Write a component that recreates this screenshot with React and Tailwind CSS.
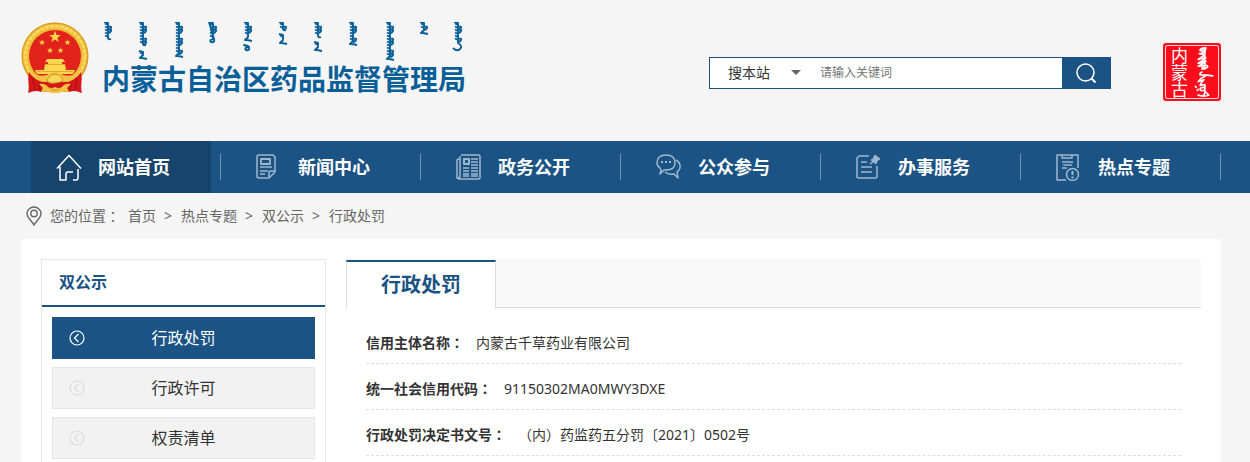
import React from "react";

const STAR = "M0-10 2.4-3.1 9.5-3.1 3.8 1.2 5.9 8.1 0 4-5.9 8.1-3.8 1.2-9.5-3.1-2.4-3.1Z";

function Emblem() {
  return (
    <svg viewBox="0 0 68 72" className="h-[72px] w-[68px] shrink-0" aria-hidden="true">
      <circle cx="34" cy="34" r="33.5" fill="#eebb36" />
      <circle cx="34" cy="34" r="32.800" fill="none" stroke="#d99d27" strokeWidth="1.2" />
      <circle cx="34" cy="34" r="29.800" fill="none" stroke="#f9d862" strokeWidth="3" strokeDasharray="4 1" />
      <path d="M8 50C6 57 9 64 7 71c5-2 9-3 13-1h28c4-2 8-1 13 1-2-7 1-14-1-21-3 5-9 9-14 10H22C17 59 11 55 8 50z" fill="#d5161a" />
      <path d="M12 56l2 12M56 56l-2 12M18 61l1 8M50 61l-1 8" stroke="#a51114" strokeWidth="1.2" />
      <circle cx="34" cy="34" r="26" fill="#e2231c" />
      <g fill="#fbd750">
        <path d={STAR} transform="translate(34 15) scale(.62)" />
        <path d={STAR} transform="translate(21 20.5) scale(.32)" />
        <path d={STAR} transform="translate(46.5 20.5) scale(.32)" />
        <path d={STAR} transform="translate(29 28.5) scale(.32)" />
        <path d={STAR} transform="translate(39.5 28.5) scale(.32)" />
        <path d="M26 37h16l2 3H24zM27 40h14v2H27zM24 42h20l1 6H23zM14 48h40l-2 4H16z" />
      </g>
      <path d="M24 42.500h20M16 49.500h36" stroke="#dc9c2b" strokeWidth=".8" />
      <path d="M9 48q8 8 17 5 4-3 8-3t8 3q9 3 17-5-4 11-16 12-4-5-9-5t-9 5Q13 59 9 48z" fill="#f1c341" />
      <path d="M27 56q3-4 7-4t7 4-7 5-7-5z" fill="#f8d65a" stroke="#d29225" />
      <path d="M18 62q6-1 9 3 3 2 7 0 4 2 7 0 3-4 9-3l-4 4 2 4q-7-1-10 1h-8q-3-2-10-1l2-4z" fill="#f1c341" />
      <path d="M29 66q5 5 10 0" fill="none" stroke="#d29225" />
    </svg>
  );
}

const SCRIPT_WORDS = [
  { x: 6, parts: [[0, 15, "hook"]] },
  { x: 41, parts: [[0, 21, "hook"], [29, 3, "tail"]] },
  { x: 77, parts: [[0, 30, "tail"]] },
  { x: 111, parts: [[0, 16, "loop"]] },
  { x: 146, parts: [[0, 14, "tail"], [23, 1, "loop"]] },
  { x: 181, parts: [[0, 6, "hook"], [12, 5, "tail"]] },
  { x: 216, parts: [[0, 13, "hook"], [20, 4, "tail"]] },
  { x: 251, parts: [[0, 18, "tail"]] },
  { x: 288, parts: [[0, 33, "tail"]] },
  { x: 322, parts: [[0, 7, "tail"]] },
  { x: 356, parts: [[0, 20, "sweep"]] },
];

const ENDINGS = {
  hook: "q1 2 3 1",
  tail: "l-3 3 2 0 5 1",
  loop: "q-4 1-2 3q4 1 3-3z",
  sweep: "q5 3 2 6t-7-1",
};

function strokes(x, [y, length, ending]) {
  let d = `M${x - 4} ${y}l4 1v${length}${ENDINGS[ending]}`;
  for (let i = 2; i < length; i += 3) {
    d += `M${x} ${y + i + 1}l-3-1.500`;
    if (i % 4 < 2) d += `M${x} ${y + i}q4-1 3 1t-3 2`;
  }
  return d;
}

function MongolianLine() {
  return (
    <svg viewBox="0 0 362 40" className="h-10 w-[362px]" fill="none" stroke="#0a5f99" strokeWidth="1.900" strokeLinejoin="round" aria-hidden="true">
      {SCRIPT_WORDS.map((w) => (
        <path key={w.x} d={w.parts.map((p) => strokes(w.x, p)).join("")} />
      ))}
    </svg>
  );
}

function Seal() {
  return (
    <a href="#" aria-label="内蒙古" className="flex size-[58px] items-center justify-center rounded-[3px] bg-[#fd0d1b] p-[2px]">
      <span className="flex size-full items-center justify-evenly rounded-[2px] border border-white/80">
        <span className="font-['Noto_Sans_CJK_SC',sans-serif] text-[17px] leading-[18px] text-white [writing-mode:vertical-rl]">
          内蒙古
        </span>
        <svg viewBox="0 0 22 54" className="h-[52px] w-[22px]" fill="none" stroke="#fff" strokeWidth="1.700" strokeLinecap="round" strokeLinejoin="round" aria-hidden="true">
          <path d="M14 2Q7 2 8 5l5-1q-2 4-6 4l6 1q-3 2-7 5l8-2q-4 4-8 6l8-2q-3 3-8 5l8-1q4 1 0 3t-4-1M14 2q-2 8-1 14 1 7-3 8" />
          <path d="M10 27q-3 1-2 3 8 0 13 1M14 31q-5 2-8 6l6-2q-3 3-4 6l5-1v8q0 3-3 4M3 42l1 1M5 46l1-1M12 43q-4 0-4 2t4 1M6 51q7 2 11 0l-3-3" />
        </svg>
      </span>
    </a>
  );
}

function HomeIcon() {
  return <path d="M1 14.500 13 1.500l12 13M4 12.500V26h6v-6q0-2 2-2h5M22 15v9q0 2-2 2h-3" />;
}
function NewsIcon() {
  return (
    <>
      <path d="M2 1h15l2 2v15l-6 6H3l-2-1V2zM19 17h-4q-2 0-2 2v5" />
      <path strokeWidth="1.800" d="M5 5h9v5H5z" />
      <path d="M4 13h12M4 17h8M4 20h5" />
    </>
  );
}
function PaperIcon() {
  return (
    <>
      <path d="M5 1h18l1 1v22l-1 1H3l-2-1V6l1-1h2M4 2v20q0 2-2 2" />
      <path strokeWidth="2" d="M8 5h5v5H8z" />
      <path d="M15 5h7M15 8h7M15 11h7M7 14h6M15 14h7M7 17h6M15 17h7M7 20h6M15 20h7M7 22h6M15 22h7" />
    </>
  );
}
function ChatIcon() {
  return (
    <>
      <path d="M4 14Q1 12 1 9q0-8 9-8t9 8q0 7-9 7H8l-4 4 1-4zM20 6q5 3 4 8-1 3-3 4l1 6-4-4q-6 1-9-2" />
      <path strokeWidth="2" d="M5 8h2M9 8h2M13 8h2" />
    </>
  );
}
function NoteIcon() {
  return (
    <>
      <path d="M13 2H3L1 4v19l1 1h18l1-1V12M5 8h6M5 13h11M5 18h11M14 10l5-4" />
      <path fill="currentColor" strokeWidth="1" d="m19 1 5 4-2 1-2 3 0 1-5-4 2-1z" />
    </>
  );
}
function AlertIcon() {
  return (
    <>
      <path d="M10 26H1V1h21v13M6 1v3h10V1M6 8h11M7 11h9M6 14h5" />
      <circle cx="16.500" cy="20.500" r="6" />
      <path strokeWidth="2" d="M16.500 17v4M16.500 22.500v2" />
    </>
  );
}

const NAV = [
  { label: "网站首页", Icon: HomeIcon, active: true },
  { label: "新闻中心", Icon: NewsIcon },
  { label: "政务公开", Icon: PaperIcon },
  { label: "公众参与", Icon: ChatIcon },
  { label: "办事服务", Icon: NoteIcon },
  { label: "热点专题", Icon: AlertIcon },
];

const CRUMBS = ["首页", "热点专题", "双公示", "行政处罚"];

const SIDE = [
  { label: "行政处罚", active: true },
  { label: "行政许可" },
  { label: "权责清单" },
];

function Wide({ children }) {
  return (
    <span lang="zh-TW" className="font-['Noto_Sans_CJK_TC',sans-serif]">
      {children}
    </span>
  );
}

const ROWS = [
  { label: "信用主体名称", value: "内蒙古千草药业有限公司" },
  { label: "统一社会信用代码", value: "91150302MA0MWY3DXE" },
  {
    label: "行政处罚决定书文号",
    value: (
      <>
        <Wide>（</Wide>内<Wide>）</Wide>药监药五分罚〔2021〕0502号
      </>
    ),
  },
];

function Header() {
  return (
    <header className="flex h-[141px] items-start justify-between pr-[29px] pl-[21px]">
      <a href="#" className="flex gap-[13px] pt-[22px]">
        <Emblem />
        <span className="flex flex-col">
          <MongolianLine />
          <h1 className="font-['Noto_Sans_CJK_SC',serif] text-[28px] leading-8 font-bold whitespace-nowrap text-[#0a5f99]">
            内蒙古自治区药品监督管理局
          </h1>
        </span>
      </a>
      <div className="flex gap-[52px] pt-[43px]">
        <form className="mt-[14px] flex h-8 w-[402px] border border-[#1a5384] bg-white" onSubmit={(e) => e.preventDefault()}>
          <div className="relative flex">
            <select aria-label="搜索范围" className="w-[100px] appearance-none bg-transparent pl-[18px] text-sm text-[#333] outline-none">
              <option>搜本站</option>
            </select>
            <svg viewBox="0 0 10 5" className="pointer-events-none absolute top-3 right-[9px] h-[5px] w-[10px]" aria-hidden="true">
              <path d="M0 0h10L5 5z" fill="#666" />
            </svg>
          </div>
          <input
            type="text"
            aria-label="请输入关键词"
            placeholder="请输入关键词"
            className="min-w-0 flex-1 bg-transparent px-[10px] text-xs text-[#333] outline-none placeholder:text-[#757575]"
          />
          <button type="submit" aria-label="搜索" className="flex w-12 items-center justify-center bg-[#1a5384]">
            <svg viewBox="0 0 20 20" className="size-5" fill="none" stroke="#fff" strokeWidth="1.5" aria-hidden="true">
              <circle cx="9.500" cy="9.500" r="8.500" />
              <path strokeWidth="2" d="m15.500 15.500 4 4" />
            </svg>
          </button>
        </form>
        <Seal />
      </div>
    </header>
  );
}

export default function App() {
  return (
    <div lang="zh-CN" className="min-h-screen bg-[#f5f5f5] font-['Noto_Sans','Noto_Sans_CJK_SC',sans-serif] text-[#333]">
      <Header />

      <nav className="bg-[#1a5384] pr-[29px] pl-[21px]">
        <ul className="grid grid-cols-6">
          {NAV.map(({ label, Icon, active }) => (
            <li key={label} className="relative flex h-[52px] px-[10px]">
              <a
                href="#"
                className={
                  "flex flex-1 items-center gap-4 pl-[25px] text-lg font-bold whitespace-nowrap text-white " +
                  (active ? "bg-[#17446c]" : "")
                }
              >
                <svg
                  viewBox="0 0 26 27"
                  className={"h-[27px] w-[26px] shrink-0 " + (active ? "text-white" : "text-[#a0b8cd]")}
                  fill="none"
                  stroke="currentColor"
                  strokeWidth="1.5"
                  strokeLinejoin="round"
                  aria-hidden="true"
                >
                  <Icon />
                </svg>
                {label}
              </a>
              <span className="absolute top-[13px] right-0 h-[26px] w-px bg-[#6f94b2]" />
            </li>
          ))}
        </ul>
      </nav>

      <div className="flex h-[46px] items-center pl-[26px] text-sm text-[#666]">
        <svg viewBox="0 0 16 20" className="mr-2 h-5 w-4" fill="none" stroke="#666" strokeWidth="1.4" aria-hidden="true">
          <path d="M8 19C6 15 1 12 1 7.500a7 6.500 0 0 1 14 0C15 12 10 15 8 19z" />
          <circle cx="8" cy="7.500" r="3.200" />
        </svg>
        <span>您的位置</span>
        <Wide>：</Wide>
        <ol className="flex gap-2 pl-2">
          {CRUMBS.map((c, i) => (
            <li key={c} className="flex gap-2">
              {i > 0 && <span className="w-[9px]">&gt;</span>}
              <a href="#">{c}</a>
            </li>
          ))}
        </ol>
      </div>

      <main className="mr-[29px] ml-[21px] flex items-start gap-5 bg-white p-5">
        <aside className="w-[285px] shrink-0 border border-[#e5e5e5]">
          <h2 className="border-b-2 border-[#1a5384] px-[17px] text-base leading-[45px] font-bold text-[#1a5384]">双公示</h2>
          <ul className="flex flex-col gap-2 p-[10px]">
            {SIDE.map(({ label, active }) => (
              <li key={label}>
                <a
                  href="#"
                  className={
                    "grid h-[42px] grid-cols-[1fr_auto_1fr] items-center border px-4 text-base " +
                    (active ? "border-[#1a5384] bg-[#1a5384] text-white" : "border-[#e5e5e5] bg-[#f2f2f2] text-[#333]")
                  }
                >
                  <svg
                    viewBox="0 0 16 16"
                    className={"size-4 " + (active ? "text-white" : "text-[#dcdcdc]")}
                    fill="none"
                    stroke="currentColor"
                    strokeWidth="1.2"
                    aria-hidden="true"
                  >
                    <circle cx="8" cy="8" r="7" />
                    <path d="M9.500 4 5.500 8l4 4" />
                  </svg>
                  {label}
                </a>
              </li>
            ))}
          </ul>
        </aside>

        <section className="min-w-0 flex-1">
          <div className="flex h-[49px] items-start border-b border-[#ddd] bg-[#f9f9f9] pt-px">
            <h2 className="h-[49px] w-[150px] border-x border-t-2 border-x-[#ddd] border-t-[#1a5384] bg-white text-center text-xl leading-[46px] font-bold text-[#1a5384]">
              行政处罚
            </h2>
          </div>
          <dl className="px-5 pt-[10px] text-sm">
            {ROWS.map(({ label, value }) => (
              <div key={label} className="flex h-[46px] items-center gap-3 border-b border-dashed border-[#ddd] pt-1">
                <dt className="font-bold">
                  {label}
                  <Wide>：</Wide>
                </dt>
                <dd>{value}</dd>
              </div>
            ))}
          </dl>
        </section>
      </main>
    </div>
  );
}
